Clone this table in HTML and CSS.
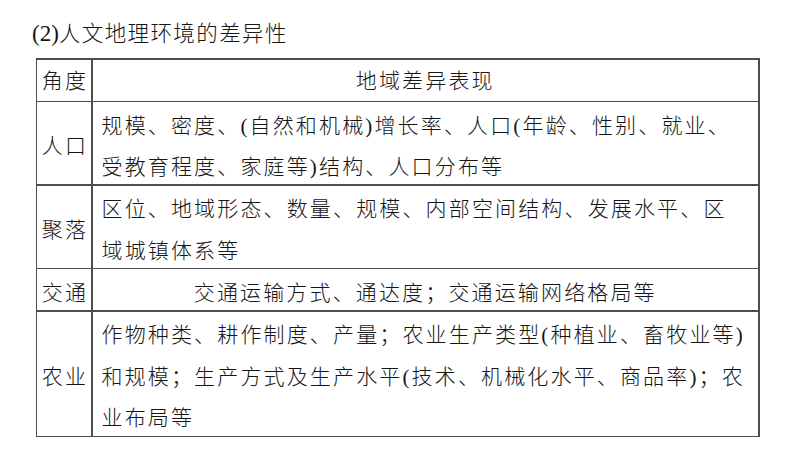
FILE: index.html
```html
<!DOCTYPE html>
<html lang="zh-CN">
<head>
<meta charset="utf-8">
<title>人文地理环境的差异性</title>
<link rel="stylesheet" href="styles.css">
</head>
<body>
<div class="page">
  <div class="title"><span class="num">(2)</span><span class="cjk">人文地理环境的差异性</span></div>
  <div class="grid">
    <div class="cell label head">角度</div>
    <div class="cell text center head"><div class="line">地域差异表现</div></div>

    <div class="cell label">人口</div>
    <div class="cell text">
      <div class="line">规模、密度、(自然和机械)增长率、人口(年龄、性别、就业、</div>
      <div class="line">受教育程度、家庭等)结构、人口分布等</div>
    </div>

    <div class="cell label">聚落</div>
    <div class="cell text">
      <div class="line">区位、地域形态、数量、规模、内部空间结构、发展水平、区</div>
      <div class="line">域城镇体系等</div>
    </div>

    <div class="cell label">交通</div>
    <div class="cell text center"><div class="line">交通运输方式、通达度；交通运输网络格局等</div></div>

    <div class="cell label">农业</div>
    <div class="cell text">
      <div class="line">作物种类、耕作制度、产量；农业生产类型(种植业、畜牧业等)</div>
      <div class="line">和规模；生产方式及生产水平(技术、机械化水平、商品率)；农</div>
      <div class="line">业布局等</div>
    </div>
  </div>
</div>
</body>
</html>
```

FILE: styles.css
```css
html, body {
  margin: 0;
  padding: 0;
  background: #ffffff;
}

body {
  font-family: "Liberation Serif", "Noto Sans CJK SC", serif;
  color: #151515;
  font-weight: 300;
}

.page {
  width: 800px;
  height: 450px;
  padding-top: 19px;
  box-sizing: border-box;
  overflow: hidden;
}

.title {
  margin: 0 0 9px 32px;
  height: 30px;
  line-height: 30px;
  white-space: nowrap;
}

.title .num {
  font-size: 23px;
}

.title .cjk {
  font-size: 21.5px;
  letter-spacing: 1.4px;
}

.grid {
  margin-left: 35.5px;
  width: 724px;
  box-sizing: border-box;
  display: grid;
  grid-template-columns: 54px 1fr;
  grid-template-rows: 41px 82px 82px 41px 124px;
  gap: 1.5px;
  padding: 1.5px;
  background: #4d4d4d;
}

.cell {
  background: #ffffff;
  display: flex;
  flex-direction: column;
  justify-content: center;
  padding-top: 8px;
  box-sizing: border-box;
  font-size: 21px;
  letter-spacing: 2.15px;
  line-height: 41.5px;
  white-space: nowrap;
  min-height: 0;
}

.cell.head {
  padding-top: 4px;
}

.label {
  align-items: center;
  padding-left: 2px;
}

.text {
  align-items: flex-start;
  padding-left: 9px;
}

.text.center {
  align-items: center;
  padding-left: 0;
}

.line {
  height: 41.5px;
}
```
